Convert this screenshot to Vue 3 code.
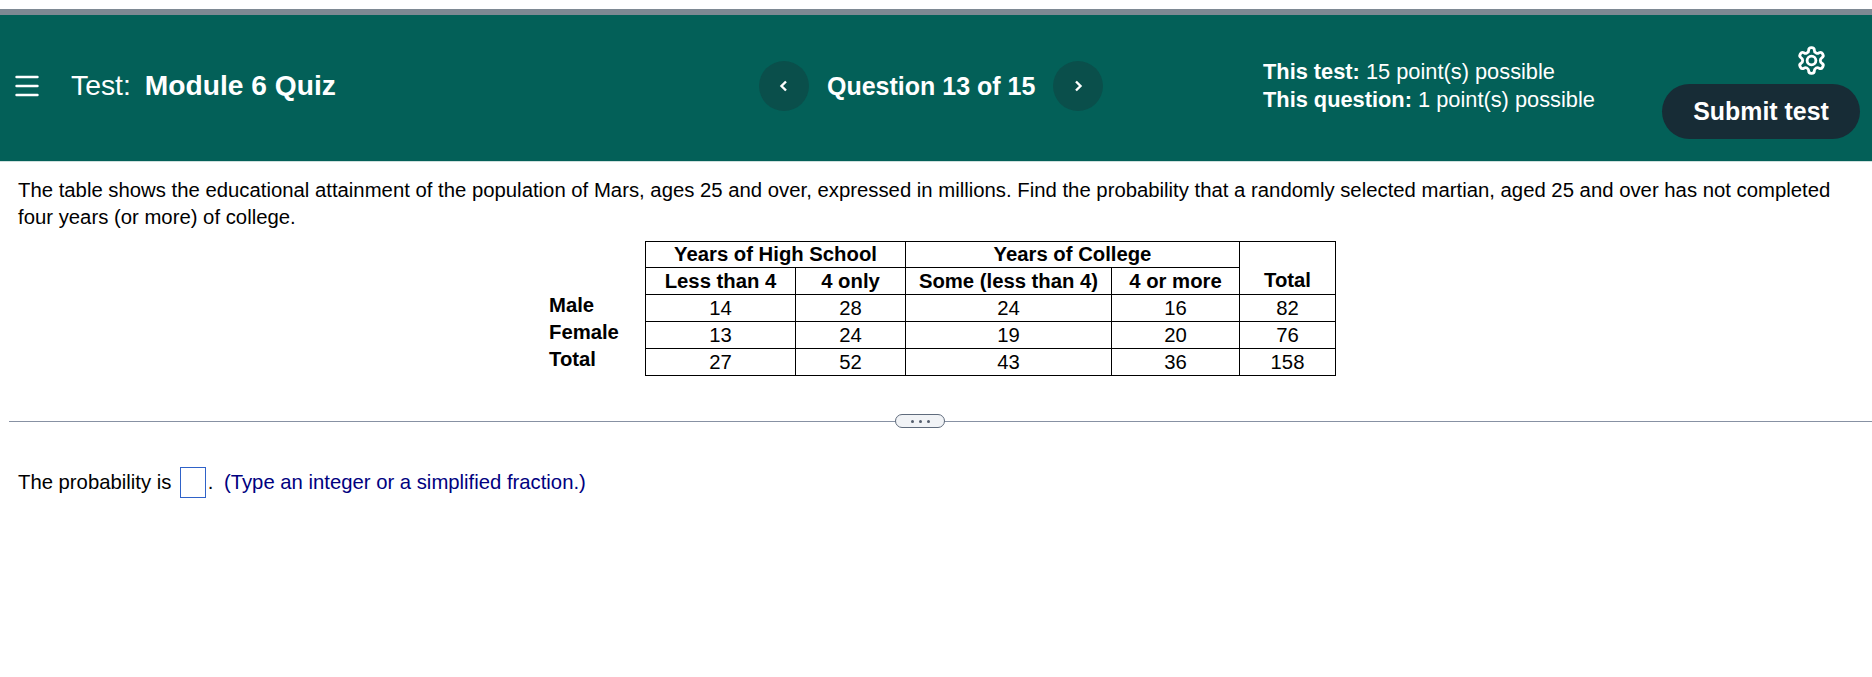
<script setup>
const rows = [
  { label: "Male", values: [14, 28, 24, 16, 82] },
  { label: "Female", values: [13, 24, 19, 20, 76] },
  { label: "Total", values: [27, 52, 43, 36, 158] },
];
</script>

<template>
  <div class="page">
    <div class="topline"></div>
    <header class="bar">
      <div class="left">
        <svg class="menu" width="24" height="24" viewBox="0 0 24 24">
          <path d="M1.5 4h21M1.5 13h21M1.5 22h21" stroke="#fff" stroke-width="2.4" stroke-linecap="round" fill="none" />
        </svg>
        <span class="title">Test:</span>
        <b class="name">Module 6 Quiz</b>
      </div>
      <div class="nav">
        <button class="round">
          <svg width="12" height="14" viewBox="0 0 12 14">
            <path d="M8 2.5 3.5 7 8 11.5" stroke="#fff" stroke-width="2.4" fill="none" />
          </svg>
        </button>
        <b class="count">Question 13 of 15</b>
        <button class="round">
          <svg width="12" height="14" viewBox="0 0 12 14">
            <path d="M4 2.5 8.5 7 4 11.5" stroke="#fff" stroke-width="2.4" fill="none" />
          </svg>
        </button>
      </div>
      <div class="points">
        <div><b>This test:</b> 15 point(s) possible</div>
        <div><b>This question:</b> 1 point(s) possible</div>
      </div>
      <div class="actions">
        <svg class="gear" width="31" height="31" viewBox="0 0 24 24" fill="none" stroke="#fff" stroke-width="2.2" stroke-linejoin="round">
          <path d="M12.22 2h-.44a2 2 0 0 0-2 2v.18a2 2 0 0 1-1 1.73l-.43.25a2 2 0 0 1-2 0l-.15-.08a2 2 0 0 0-2.73.73l-.22.38a2 2 0 0 0 .73 2.73l.15.1a2 2 0 0 1 1 1.72v.51a2 2 0 0 1-1 1.74l-.15.09a2 2 0 0 0-.73 2.73l.22.38a2 2 0 0 0 2.73.73l.15-.08a2 2 0 0 1 2 0l.43.25a2 2 0 0 1 1 1.73V20a2 2 0 0 0 2 2h.44a2 2 0 0 0 2-2v-.18a2 2 0 0 1 1-1.73l.43-.25a2 2 0 0 1 2 0l.15.08a2 2 0 0 0 2.73-.73l.22-.39a2 2 0 0 0-.73-2.73l-.15-.08a2 2 0 0 1-1-1.74v-.5a2 2 0 0 1 1-1.74l.15-.09a2 2 0 0 0 .73-2.73l-.22-.38a2 2 0 0 0-2.73-.73l-.15.08a2 2 0 0 1-2 0l-.43-.25a2 2 0 0 1-1-1.73V4a2 2 0 0 0-2-2z" />
          <circle cx="12" cy="12" r="3.4" />
        </svg>
        <button class="submit">Submit test</button>
      </div>
    </header>

    <main class="content">
      <p class="question">
        The table shows the educational attainment of the population of Mars, ages 25 and over, expressed in millions. Find the probability that a randomly selected martian, aged 25 and over has not completed four years (or more) of college.
      </p>
      <div class="table-wrap">
        <table class="data">
          <thead>
            <tr class="first">
              <th class="side"></th>
              <th class="cell c1" colspan="2">Years of High School</th>
              <th class="cell" colspan="2">Years of College</th>
              <th class="cell total-top"></th>
            </tr>
            <tr>
              <th class="side"></th>
              <th class="cell c1">Less than 4</th>
              <th class="cell c2">4 only</th>
              <th class="cell c3">Some (less than 4)</th>
              <th class="cell c4">4 or more</th>
              <th class="cell c5 total-bottom">Total</th>
            </tr>
          </thead>
          <tbody>
            <tr v-for="row in rows" :key="row.label">
              <th class="side">{{ row.label }}</th>
              <td v-for="(v, i) in row.values" :key="i" class="cell">{{ v }}</td>
            </tr>
          </tbody>
        </table>
      </div>
    </main>

    <div class="divider">
      <span class="handle"><i></i><i></i><i></i></span>
    </div>

    <div class="answer">
      <span>The probability is</span>
      <span class="box"></span>
      <span class="dot">.</span>
      <span class="hint">(Type an integer or a simplified fraction.)</span>
    </div>
  </div>
</template>

<style>
body {
  background: #fff;
}
</style>

<style scoped>
.page {
  width: 1872px;
  height: 677px;
  padding-top: 9px;
  box-sizing: border-box;
  overflow: hidden;
  font-family: "Liberation Sans", Arial, sans-serif;
  color: #000;
}
.topline {
  height: 6px;
  background: #7e8993;
}
.bar {
  height: 146px;
  background: #036058;
  border-bottom: 1px solid #cfe0de;
  display: flex;
  align-items: center;
  color: #fff;
}
.left {
  display: flex;
  align-items: center;
  width: 759px;
  padding-left: 15px;
  padding-bottom: 6px;
  box-sizing: border-box;
}
.menu {
  margin-right: 32px;
}
.title {
  font-size: 28.3px;
  margin-right: 14px;
}
.name {
  font-size: 28.2px;
}
.nav {
  display: flex;
  align-items: center;
  width: 505px;
  padding-bottom: 4px;
}
.round {
  width: 50px;
  height: 50px;
  border: 0;
  padding: 0;
  border-radius: 50%;
  background: #0a4f4b;
  display: flex;
  align-items: center;
  justify-content: center;
}
.count {
  font-size: 25px;
  margin: 0 18px;
}
.points {
  width: 398px;
  margin-left: -1px;
  font-size: 21.8px;
  line-height: 27.5px;
  padding-bottom: 5px;
}
.actions {
  display: flex;
  flex-direction: column;
  align-items: flex-end;
  margin-top: 8px;
  margin-left: 1px;
}
.gear {
  margin-right: 33px;
  margin-bottom: 8px;
}
.submit {
  width: 198px;
  height: 55px;
  border: 0;
  border-radius: 28px;
  background: #172c36;
  color: #fff;
  font: bold 24.9px "Liberation Sans", Arial, sans-serif;
}
.content {
  padding: 15px 18px 0;
}
.question {
  margin: 0;
  font-size: 20.32px;
  line-height: 27px;
}
.table-wrap {
  margin-top: 10px;
  padding-left: 531px;
}
.data {
  border-collapse: collapse;
  font-size: 20.3px;
}
.side {
  width: 96px;
  min-width: 96px;
  padding: 0;
  text-align: left;
  font-weight: bold;
  vertical-align: top;
  line-height: 21px;
}
.cell {
  border: 1px solid #000;
  height: 25px;
  padding: 0 0 1px;
  text-align: center;
  line-height: 22px;
}
.first .cell {
  height: 24px;
}
.c1 { width: 149px; }
.c2 { width: 109px; }
.c3 { width: 205px; }
.c4 { width: 127px; }
.c5 { width: 95px; }
.total-top {
  border-bottom: 0;
}
.total-bottom {
  border-top: 0;
}
.divider {
  position: relative;
  margin: 45px 0 0 9px;
  height: 1px;
  background: #8791a3;
}
.handle {
  position: absolute;
  left: 886px;
  top: -7px;
  width: 50px;
  height: 14px;
  box-sizing: border-box;
  border: 1px solid #5f6b7c;
  border-radius: 7px;
  background: #f1f3f6;
  display: flex;
  align-items: center;
  justify-content: center;
  gap: 5px;
}
.handle i {
  width: 3px;
  height: 3px;
  border-radius: 50%;
  background: #555f6e;
}
.answer {
  margin: 45px 0 0 18px;
  font-size: 20.3px;
  line-height: 31px;
  display: flex;
  align-items: center;
}
.box {
  width: 26px;
  height: 31px;
  margin-left: 8.5px;
  box-sizing: border-box;
  border: 1px solid #2f62c8;
}
.dot {
  margin-left: 2px;
}
.hint {
  color: #000080;
  margin-left: 10.5px;
}
</style>
